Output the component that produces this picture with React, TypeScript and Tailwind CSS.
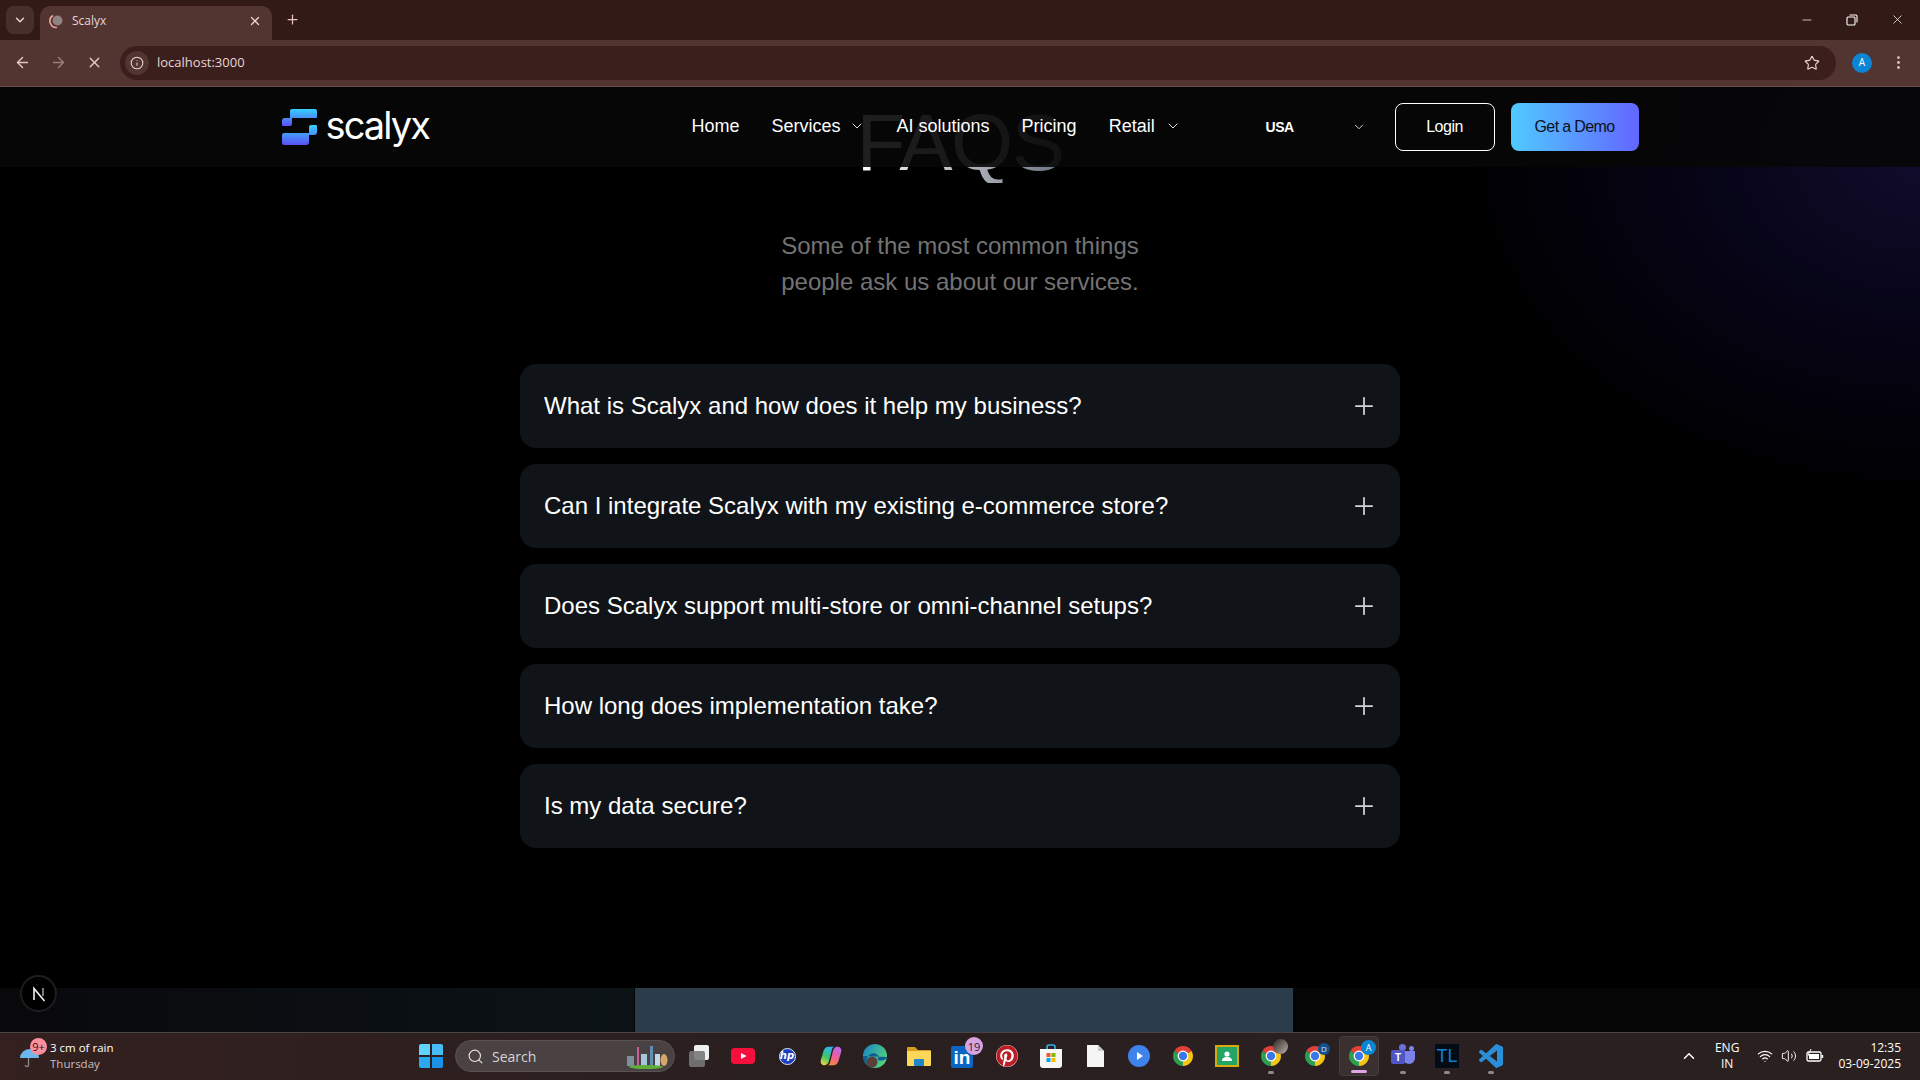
import type { ReactNode } from 'react';
import { ArrowLeft, ArrowRight, ChevronDown, ChevronUp, EllipsisVertical, Info, Minus, Plus, Search, Star, Volume2, Wifi, X } from 'lucide-react';
import { FaPinterest } from 'react-icons/fa';

const sans = "font-['Liberation_Sans',Arial,sans-serif]";
const ui = "font-['Open_Sans','Noto_Sans',sans-serif]";

const faqs = [
  'What is Scalyx and how does it help my business?',
  'Can I integrate Scalyx with my existing e-commerce store?',
  'Does Scalyx support multi-store or omni-channel setups?',
  'How long does implementation take?',
  'Is my data secure?',
];

function ChromeIcon({ children }: { children?: ReactNode }) {
  return (
    <div className="relative h-6 w-6">
      <svg viewBox="0 0 24 24" className="h-6 w-6">
        <path d="M12 12 20.66 7A10 10 0 0 0 3.34 7Z" fill="#e0423a" />
        <path d="M12 12 12 22A10 10 0 0 0 20.66 7Z" fill="#f5c518" />
        <path d="M12 12 3.34 7A10 10 0 0 0 12 22Z" fill="#2f9e4f" />
        <circle cx="12" cy="12" r="5.4" fill="#fff" />
        <circle cx="12" cy="12" r="4.2" fill="#3b78e7" />
      </svg>
      {children}
    </div>
  );
}

function RunDot({ active }: { active?: boolean }) {
  return (
    <div className={`absolute left-1/2 -translate-x-1/2 rounded-full ${active ? 'bottom-[2px] h-[3px] w-4 bg-[#dfa6e4]' : 'bottom-[2px] h-[3px] w-[6px] bg-[#8d8a8a]'}`} />
  );
}

function TaskIcon({ children, dot, active }: { children: ReactNode; dot?: boolean; active?: boolean }) {
  return (
    <div className={`relative flex h-10 w-10 items-center justify-center rounded ${active ? 'border border-[#453c3c] bg-[#3a3030]' : ''}`}>
      {children}
      {(dot || active) && <RunDot active={active} />}
    </div>
  );
}

function Taskbar() {
  return (
    <footer className={`flex h-12 items-center border-t border-[#4a4545] bg-[linear-gradient(90deg,#33201f,#2a1f1f_40%,#2a2021_70%,#2b2020)] pb-[1px] text-white ${ui}`}>
      {/* Weather */}
      <div className="relative flex w-[419px] items-center pl-[50px]">
        <svg viewBox="0 0 20 20" className="absolute left-[20px] top-[9px] h-5 w-5">
          <path d="M0 9A9.5 9 0 0 1 19 9Z" fill="#6cb8ec" />
          <path d="M8.5 9V16a1.6 1.6 0 0 1-3.2 0" fill="none" stroke="#8a8a8a" strokeWidth="1.3" />
        </svg>
        <div className="absolute left-[30px] top-[-2px] flex h-[17px] w-[17px] items-center justify-center rounded-full bg-[#ff8f9e] text-[11px] leading-none text-[#2a1010]">9+</div>
        <div className="text-[11.5px] leading-4">
          <div>3 cm of rain</div>
          <div className="text-[#c4bfbf]">Thursday</div>
        </div>
      </div>

      {/* Start */}
      <div className="grid h-6 w-6 grid-cols-2 gap-[1.5px]">
        <div className="rounded-tl-[2px] bg-[#61d2fb]" />
        <div className="rounded-tr-[2px] bg-[#46bdf6]" />
        <div className="rounded-bl-[2px] bg-[#2aa8f0]" />
        <div className="rounded-br-[2px] bg-[#1a92e6]" />
      </div>

      {/* Search */}
      <div className="relative ml-[12px] flex h-8 w-[220px] items-center rounded-full border border-[#5a5152] bg-[#4a4143] pl-[11px]">
        <Search size={17} className="text-[#e8e4e4]" strokeWidth={1.6} />
        <span className="ml-[8px] text-[14px] text-[#d8d3d3]">Search</span>
        <svg viewBox="0 0 46 28" className="absolute right-[3px] top-[1px] h-7 w-[46px]">
          <rect x="2" y="14" width="7" height="10" fill="#7b8f9e" />
          <rect x="12" y="5" width="2" height="19" fill="#c65f9a" />
          <rect x="16" y="12" width="6" height="12" fill="#a5c7dc" />
          <rect x="25" y="4" width="3" height="20" fill="#5f8fb5" />
          <rect x="30" y="12" width="5" height="12" fill="#c5d7e3" />
          <ellipse cx="39" cy="18" rx="3.5" ry="6" fill="#d9a76a" />
          <ellipse cx="21" cy="25" rx="17" ry="2" fill="#5fae3a" />
        </svg>
      </div>

      {/* Pinned apps */}
      <div className="ml-[4px] flex items-center gap-[4px]">
        <TaskIcon>
          <div className="relative h-6 w-6">
            <div className="absolute right-[2px] top-[1px] h-[15px] w-[15px] rounded-[2px] bg-[#efefef]" />
            <div className="absolute bottom-[1px] left-[2px] h-[16px] w-[16px] rounded-[2px] bg-[#777]/90" />
          </div>
        </TaskIcon>
        <TaskIcon>
          <svg viewBox="0 0 24 24" className="h-6 w-6">
            <rect y="4" width="24" height="16" rx="4" fill="#f50f3c" />
            <path d="M10 9 15.5 12 10 15Z" fill="#fff" />
          </svg>
        </TaskIcon>
        <TaskIcon>
          <div className="flex h-[17px] w-[17px] items-center justify-center rounded-full border border-[#dfe6f8] bg-[#1c3fbf] font-['DejaVu_Sans',sans-serif] text-[10px] font-bold italic leading-none text-white">hp</div>
        </TaskIcon>
        <TaskIcon>
          <svg viewBox="0 0 24 24" className="h-[22px] w-[22px]">
            <defs>
              <linearGradient id="cop1" x1="0.6" y1="0" x2="0.2" y2="1">
                <stop offset="0" stopColor="#2fb4f0" />
                <stop offset="0.55" stopColor="#38c66a" />
                <stop offset="1" stopColor="#f2d53c" />
              </linearGradient>
              <linearGradient id="cop2" x1="0.7" y1="0" x2="0.3" y2="1">
                <stop offset="0" stopColor="#b56cf0" />
                <stop offset="0.5" stopColor="#ef5aa0" />
                <stop offset="1" stopColor="#f58a3c" />
              </linearGradient>
            </defs>
            <path d="M9 2h7c-1.5 0-2.5 1-3 3l-3 12c-.7 3-2.500 5-5 5-3.500 0-5-3-4-6l3-10C5 3.500 7 2 9 2Z" fill="url(#cop1)" />
            <path d="M15 22H8c1.500 0 2.500-1 3-3l3-12c.7-3 2.500-5 5-5 3.500 0 5 3 4 6l-3 10c-.8 2.500-3 4-5 4Z" fill="url(#cop2)" />
          </svg>
        </TaskIcon>
        <TaskIcon>
          <svg viewBox="0 0 24 24" className="h-6 w-6">
            <defs>
              <linearGradient id="edg" x1="0" y1="0" x2="1" y2="0.6">
                <stop offset="0" stopColor="#1b82c9" />
                <stop offset="1" stopColor="#4fd37a" />
              </linearGradient>
            </defs>
            <circle cx="12" cy="12" r="12" fill="url(#edg)" />
            <path d="M24 13c0 2-3 3.5-6 3.5-4 0-4-2-2-3.5-1-4-7-5-10-2C3 14 3 19 5 22 1 19 0 15 0 12" fill="#0f5d94" />
            <circle cx="9" cy="18" r="5.5" fill="#5a4038" />
          </svg>
        </TaskIcon>
        <TaskIcon>
          <svg viewBox="0 0 24 24" className="h-6 w-6">
            <path d="M0 4a1 1 0 0 1 1-1h7l3 3h12a1 1 0 0 1 1 1v3H0Z" fill="#d69e1f" />
            <path d="M0 7h24v14a1 1 0 0 1-1 1H1a1 1 0 0 1-1-1Z" fill="#fbd75a" />
            <rect x="7" y="15" width="10" height="7" rx="1" fill="#1f86c9" />
          </svg>
        </TaskIcon>
        <TaskIcon>
          <div className="relative h-6 w-6">
            <div className={`mt-[2px] flex h-[22px] w-[22px] items-end justify-center rounded-[2px] bg-[#0a66c2] ${sans} text-[19px] font-bold leading-[21px] text-white`}>in</div>
            <div className="absolute right-[-8px] top-[-7px] flex h-[18px] w-[18px] items-center justify-center rounded-full bg-[#d7a3e0] text-[11px] leading-none text-[#2a1c2c]">19</div>
          </div>
        </TaskIcon>
        <TaskIcon>
          <div className="rounded-full bg-white">
            <FaPinterest size={22} className="text-[#bd1c24]" />
          </div>
        </TaskIcon>
        <TaskIcon>
          <svg viewBox="0 0 24 24" className="h-6 w-6">
            <path d="M8 5V3a2 2 0 0 1 2-2h4a2 2 0 0 1 2 2v2" fill="none" stroke="#35b4e6" strokeWidth="1.6" />
            <path d="M1 5h22v16a3 3 0 0 1-3 3H4a3 3 0 0 1-3-3Z" fill="#f6f6f6" />
            <rect x="7.5" y="9" width="4" height="4" fill="#f0562c" />
            <rect x="12.5" y="9" width="4" height="4" fill="#7fba00" />
            <rect x="7.5" y="14" width="4" height="4" fill="#00a4ef" />
            <rect x="12.5" y="14" width="4" height="4" fill="#ffb900" />
          </svg>
        </TaskIcon>
        <TaskIcon>
          <svg viewBox="0 0 24 24" className="h-6 w-6">
            <path d="M4 1h11l6 6v16H4Z" fill="#f5f5f5" />
            <path d="M15 1l6 6h-6Z" fill="#c9c9c9" />
          </svg>
        </TaskIcon>
        <TaskIcon>
          <svg viewBox="0 0 24 24" className="h-6 w-6">
            <circle cx="12" cy="12" r="11" fill="#3f82ea" />
            <path d="M10 8 16 12 10 16Z" fill="#fff" />
          </svg>
        </TaskIcon>
        <TaskIcon><ChromeIcon /></TaskIcon>
        <TaskIcon>
          <svg viewBox="0 0 24 24" className="h-6 w-6">
            <rect width="24" height="22" y="1" fill="#d8a90f" />
            <rect x="2" y="3" width="20" height="18" fill="#22a565" />
            <circle cx="12" cy="10" r="2.6" fill="#fff" />
            <path d="M7 17c0-3 2-4 5-4s5 1 5 4Z" fill="#fff" />
          </svg>
        </TaskIcon>
        <TaskIcon dot>
          <ChromeIcon>
            <div className="absolute right-[-5px] top-[-5px] h-[15px] w-[15px] rounded-full bg-[linear-gradient(135deg,#2a2422,#b9b0a8)]" />
          </ChromeIcon>
        </TaskIcon>
        <TaskIcon>
          <ChromeIcon>
            <div className="absolute right-[-3px] top-[-1px] flex h-[12px] w-[12px] items-center justify-center rounded-full bg-[#14528f] text-[8px] leading-none text-[#cfe2f5]">D</div>
          </ChromeIcon>
        </TaskIcon>
        <TaskIcon active>
          <ChromeIcon>
            <div className="absolute right-[-5px] top-[-4px] flex h-[15px] w-[15px] items-center justify-center rounded-full bg-[#0c86d4] text-[9px] leading-none text-white">A</div>
          </ChromeIcon>
        </TaskIcon>
        <TaskIcon dot>
          <div className="relative h-6 w-6">
            <div className="absolute right-0 top-[7px] h-[13px] w-[12px] rounded-b-md bg-[#7b83eb]" />
            <div className="absolute right-[1px] top-[2px] h-[5px] w-[5px] rounded-full bg-[#7b83eb]" />
            <div className="absolute left-[8px] top-0 h-[7px] w-[7px] rounded-full bg-[#6a70d8]" />
            <div className={`absolute left-0 top-[6px] flex h-[14px] w-[14px] items-center justify-center rounded-[2px] bg-[#4f55c2] ${sans} text-[10px] font-bold text-white`}>T</div>
          </div>
        </TaskIcon>
        <TaskIcon dot>
          <div className={`flex h-6 w-6 items-center justify-center bg-[#020c14] ${sans} text-[18px] leading-none text-[#0f7fd0]`}>TL</div>
        </TaskIcon>
        <TaskIcon dot>
          <svg viewBox="0 0 24 24" className="h-6 w-6">
            <path fill="#2a8fd8" d="M23.15 2.587L18.21.21a1.494 1.494 0 0 0-1.705.29l-9.46 8.63-4.12-3.128a.999.999 0 0 0-1.276.057L.327 7.261A1 1 0 0 0 .326 8.74L3.899 12 .326 15.26a1 1 0 0 0 .001 1.479L1.65 17.94a.999.999 0 0 0 1.276.057l4.12-3.128 9.46 8.63a1.492 1.492 0 0 0 1.704.29l4.942-2.377A1.5 1.5 0 0 0 24 20.06V3.939a1.5 1.5 0 0 0-.85-1.352zm-5.146 14.861L10.826 12l7.178-5.448v10.896z" />
          </svg>
        </TaskIcon>
      </div>

      {/* Tray */}
      <div className="ml-auto flex items-center pr-[19px]">
        <ChevronUp size={18} strokeWidth={2} />
        <div className="ml-[17px] text-center text-[12px] leading-4">
          <div>ENG</div>
          <div>IN</div>
        </div>
        <Wifi size={16} className="ml-[18px]" strokeWidth={1.8} />
        <Volume2 size={16} className="ml-[8px]" strokeWidth={1.4} />
        <svg viewBox="0 0 18 14" className="ml-[9px] h-[14px] w-[18px]">
          <rect x="1" y="3" width="14" height="9" rx="1.5" fill="none" stroke="#fff" strokeWidth="1.3" />
          <rect x="3" y="5" width="10" height="5" fill="#fff" />
          <rect x="15.6" y="6" width="1.6" height="3" fill="#fff" />
          <path d="M5 0 2 6h3l-1 3" fill="none" stroke="#fff" strokeWidth="1" />
        </svg>
        <div className="ml-[14px] text-right text-[12px] leading-4">
          <div>12:35</div>
          <div>03-09-2025</div>
        </div>
      </div>
    </footer>
  );
}

function BrowserChrome() {
  return (
    <div className={`${ui} text-[#e8d6d3]`}>
      {/* Tab strip */}
      <div className="flex h-10 items-end bg-[#321a16] pl-[6px]">
        <div className="mb-[6px] flex h-7 w-7 items-center justify-center rounded-lg bg-[#472f2c]">
          <ChevronDown size={14} strokeWidth={2.5} />
        </div>
        <div className="ml-[6px] flex h-[34px] w-[232px] items-center rounded-t-[10px] bg-[#523431] pb-[4px] pl-[8px] pr-[10px]">
          <svg viewBox="0 0 16 16" className="h-4 w-4">
            <path d="M5 2.5A6.5 6.5 0 0 0 9 14.5" fill="none" stroke="#eba597" strokeWidth="1.6" />
            <circle cx="9.5" cy="7.5" r="5" fill="#8f8482" />
          </svg>
          <span className="ml-[8px] flex-1 text-[12px]">Scalyx</span>
          <X size={14} strokeWidth={2.2} />
        </div>
        <Plus size={15} strokeWidth={2} className="mb-[13px] ml-[13px] text-[#e8c6c0]" />
        <div className="ml-auto mb-[13px] flex items-center gap-[32px] pr-[15px] text-white">
          <Minus size={14} strokeWidth={1.2} />
          <svg viewBox="0 0 12 12" className="h-3 w-3" fill="none" stroke="#fff" strokeWidth="1.1">
            <rect x="1" y="3" width="8" height="8" rx="1" />
            <path d="M3.5 1H10a1.2 1.2 0 0 1 1 1v6.5" />
          </svg>
          <X size={15} strokeWidth={1.2} />
        </div>
      </div>
      {/* Toolbar */}
      <div className="flex h-[47px] items-center border-b border-[#6b4c49] bg-[#523431] pb-[1px]">
        <ArrowLeft size={17} strokeWidth={2} className="ml-[14px] text-[#e8c6c0]" />
        <ArrowRight size={17} strokeWidth={2} className="ml-[19px] text-[#9c7f7b]" />
        <X size={17} strokeWidth={2} className="ml-[19px] text-[#e8c6c0]" />
        <div className="ml-[17px] flex h-[34px] flex-1 items-center rounded-full bg-[#3a1f1c] pl-[5px] pr-[16px]">
          <div className="flex h-6 w-6 items-center justify-center rounded-full bg-[#523431]">
            <Info size={14} strokeWidth={1.8} />
          </div>
          <span className="ml-[8px] flex-1 text-[13px]">localhost:3000</span>
          <Star size={16} strokeWidth={1.7} />
        </div>
        <div className="ml-[16px] flex h-5 w-5 items-center justify-center rounded-full bg-[#0c86d4] text-[10px] text-white">A</div>
        <EllipsisVertical size={17} strokeWidth={2} className="ml-[18px] mr-[13px] text-[#e8c6c0]" />
      </div>
    </div>
  );
}

function Navbar() {
  return (
    <header className={`absolute inset-x-0 top-0 z-10 h-20 bg-[#070707]/90 text-white ${sans}`}>
      <div className="mx-auto flex h-full w-[1357px] items-center">
        <div className="flex w-[410px] items-center">
          <svg viewBox="0 0 35 36" className="h-9 w-[35px]">
            <defs>
              <linearGradient id="logo" x1="0" y1="0" x2="0" y2="1">
                <stop offset="0" stopColor="#35d0ff" />
                <stop offset="1" stopColor="#5a50f5" />
              </linearGradient>
            </defs>
            <path d="M8 2a2 2 0 0 1 2-2h23a2 2 0 0 1 2 2v6a1 1 0 0 1-1 1H10v6a2 2 0 0 1-2 2H1a1 1 0 0 1-1-1v-4a3 3 0 0 1 2-3h6Z" fill="url(#logo)" />
            <path d="M27 18a2 2 0 0 1 2-2h5a1 1 0 0 1 1 1v6a3 3 0 0 1-3 3h-5v7a3 3 0 0 1-3 3H2a2 2 0 0 1-2-2v-8a2 2 0 0 1 2-2h25Z" fill="url(#logo)" />
          </svg>
          <span className="ml-[9px] mb-[5px] font-['Inter',sans-serif] text-[38px] leading-none tracking-[-0.05em]">scalyx</span>
        </div>
        <nav className="mb-[2px] flex items-center gap-8 text-[18px]">
          <span>Home</span>
          <span className="flex items-center gap-[8px]">Services <ChevronDown size={16} strokeWidth={1.3} /></span>
          <span>AI solutions</span>
          <span>Pricing</span>
          <span className="flex items-center gap-[10px]">Retail <ChevronDown size={16} strokeWidth={1.3} /></span>
        </nav>
        <div className="ml-auto flex items-center">
          <div className="flex w-[100px] items-center justify-between text-[14px] font-bold tracking-[-0.03em]">
            USA
            <ChevronDown size={14} strokeWidth={1.4} />
          </div>
          <div className="ml-[29px] flex h-12 w-[100px] items-center justify-center rounded-lg border border-white text-[16px] tracking-[-0.03em]">Login</div>
          <div className="ml-4 flex h-12 w-[128px] items-center justify-center rounded-lg bg-[linear-gradient(90deg,#4fcaff,#6366ff)] text-[16px] tracking-[-0.04em] text-[#0b1020]">Get a Demo</div>
        </div>
      </div>
    </header>
  );
}

export default function App() {
  return (
    <div className="flex h-[1080px] flex-col overflow-hidden bg-black">
      <BrowserChrome />

      <main className={`relative flex min-h-0 flex-1 flex-col overflow-hidden bg-[radial-gradient(ellipse_460px_340px_at_100%_70px,#110c2c_0%,#070518_45%,#000000_100%)] ${sans}`}>
        <Navbar />

        <section className="flex flex-1 flex-col items-center pt-[16px]">
          <h1 className="bg-[linear-gradient(90deg,#ffffff,#6b7280)] bg-clip-text text-[80px] leading-none tracking-[-0.02em] text-transparent">FAQS</h1>
          <p className="mt-[45px] text-center text-[24px] leading-9 text-[#737373]">
            Some of the most common things
            <br />
            people ask us about our services.
          </p>
          <div className="mt-16 flex w-[880px] flex-col gap-4">
            {faqs.map((q) => (
              <div key={q} className="flex h-[84px] items-center justify-between rounded-2xl bg-[#101418] pl-6 pr-[22px]">
                <span className="text-[24px] text-white">{q}</span>
                <Plus size={28} strokeWidth={1.5} className="text-[#d1d5db]" />
              </div>
            ))}
          </div>
        </section>

        {/* Next section peeking in */}
        <div className="flex h-11 bg-[linear-gradient(90deg,#09090c,#0c1317_33%,#050505_33%)]">
          <div className="ml-[635px] w-[658px] bg-[#2b3d4b]" />
        </div>

        {/* Next.js dev badge */}
        <div className="absolute bottom-[20px] left-[20px] flex h-[37px] w-[37px] items-center justify-center rounded-full border-2 border-[#1e1e1e] bg-black">
          <svg viewBox="0 0 16 16" className="h-4 w-4" fill="none" strokeWidth="1.6">
            <path d="M3 14V2.5L13.5 15" stroke="#f2f2f2" />
            <path d="M12 2v8" stroke="#9a9a9a" />
          </svg>
        </div>
      </main>

      <Taskbar />
    </div>
  );
}
